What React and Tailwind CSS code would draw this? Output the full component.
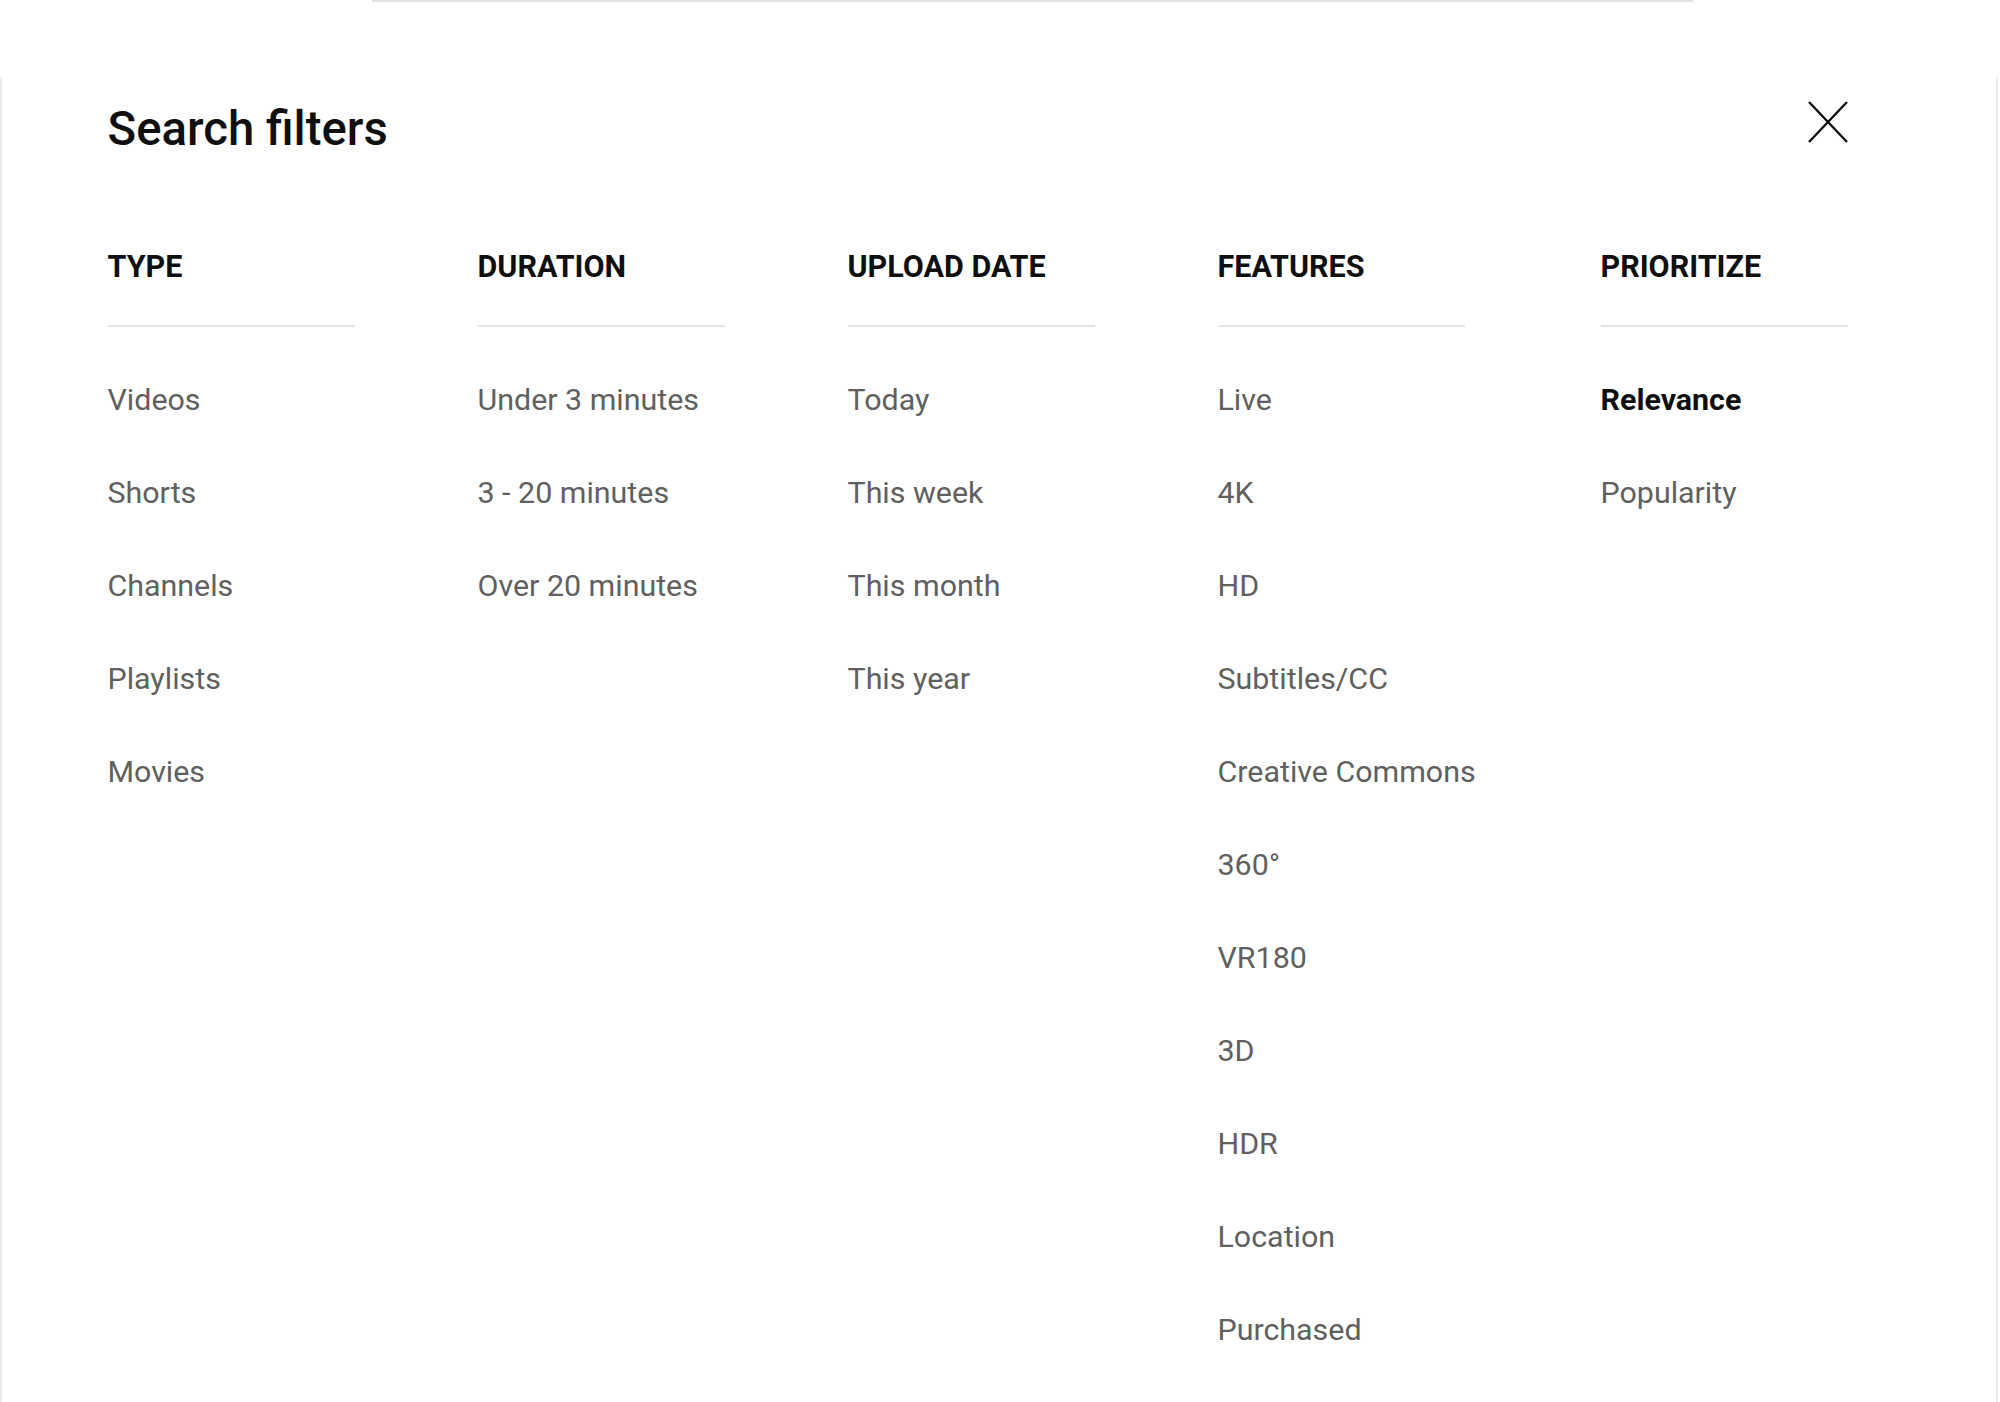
import React, { useState } from 'react';

const columns = [
  { title: 'TYPE', width: 'w-[370px]', items: ['Videos', 'Shorts', 'Channels', 'Playlists', 'Movies'] },
  { title: 'DURATION', width: 'w-[370px]', items: ['Under 3 minutes', '3 - 20 minutes', 'Over 20 minutes'] },
  { title: 'UPLOAD DATE', width: 'w-[370px]', items: ['Today', 'This week', 'This month', 'This year'] },
  {
    title: 'FEATURES',
    width: 'w-[383px]',
    items: ['Live', '4K', 'HD', 'Subtitles/CC', 'Creative Commons', '360°', 'VR180', '3D', 'HDR', 'Location', 'Purchased'],
  },
  { title: 'PRIORITIZE', width: 'w-[247px]', items: ['Relevance', 'Popularity'] },
];

function CloseIcon() {
  return (
    <svg width="40" height="42" viewBox="0 0 40 42" fill="none">
      <path d="M1 1 L39 41 M39 1 L1 41" stroke="#0f0f0f" strokeWidth="2.4" />
    </svg>
  );
}

export default function App() {
  // only the sort column has a selected entry
  const [selected, setSelected] = useState('Relevance');

  return (
    <div className="w-[2000px] h-[1402px] bg-white overflow-hidden font-['Roboto',_'Noto_Sans',_sans-serif]">
      {/* search bar edge behind the dialog */}
      <div className="ml-[372px] w-[1321px] h-[2px] bg-[#e3e3e3]" />

      <div className="mt-[75px] w-[1998px] h-[1325px] bg-white border-l-2 border-r-2 border-[#ebebeb] pl-[105.5px] pr-[148px] pt-[24px]">
        {/* Header */}
        <div className="flex items-start justify-between h-[56px]">
          <h1 className="text-[47.3px] leading-[56px] font-medium text-[#0f0f0f]">Search filters</h1>
          <button className="w-[40px] h-[42px]">
            <CloseIcon />
          </button>
        </div>

        {/* Filter columns */}
        <div className="flex mt-[92px]">
          {columns.map((col) => (
            <div key={col.title} className={`${col.width} shrink-0`}>
              <div className="h-[36px] leading-[36px] text-[30.5px] font-bold text-[#0f0f0f]">{col.title}</div>
              <div className="mt-[40px] w-[247px] h-[2px] bg-[#e3e3e3]" />
              <ul className="mt-[26px]">
                {col.items.map((item) => {
                  const isSelected = col.title === 'PRIORITIZE' && item === selected;
                  return (
                    <li
                      key={item}
                      onClick={() => col.title === 'PRIORITIZE' && setSelected(item)}
                      className={`h-[93px] flex items-center text-[30.4px] cursor-pointer ${
                        isSelected ? 'font-bold text-[#0f0f0f]' : 'text-[#606060]'
                      }`}
                    >
                      {item}
                    </li>
                  );
                })}
              </ul>
            </div>
          ))}
        </div>
      </div>
    </div>
  );
}
